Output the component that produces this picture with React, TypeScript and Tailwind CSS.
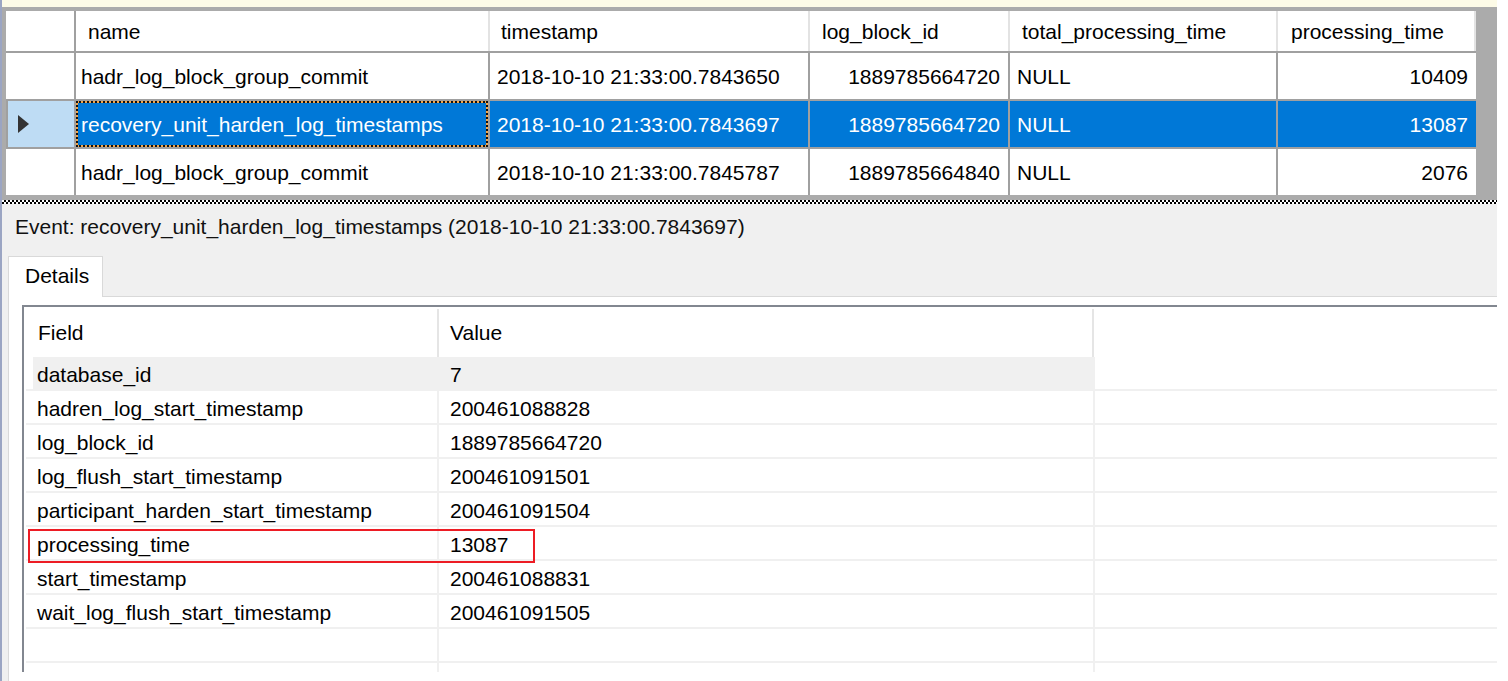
import React from 'react'

type EventRow = { name: string; ts: string; block: string; total: string; proc: string; sel?: boolean }

const rows: EventRow[] = [
  { name: 'hadr_log_block_group_commit', ts: '2018-10-10 21:33:00.7843650', block: '1889785664720', total: 'NULL', proc: '10409' },
  { name: 'recovery_unit_harden_log_timestamps', ts: '2018-10-10 21:33:00.7843697', block: '1889785664720', total: 'NULL', proc: '13087', sel: true },
  { name: 'hadr_log_block_group_commit', ts: '2018-10-10 21:33:00.7845787', block: '1889785664840', total: 'NULL', proc: '2076' },
]

const fields: [string, string][] = [
  ['database_id', '7'],
  ['hadren_log_start_timestamp', '200461088828'],
  ['log_block_id', '1889785664720'],
  ['log_flush_start_timestamp', '200461091501'],
  ['participant_harden_start_timestamp', '200461091504'],
  ['processing_time', '13087'],
  ['start_timestamp', '200461088831'],
  ['wait_log_flush_start_timestamp', '200461091505'],
  ['', ''],
  ['', ''],
]

const hcell = 'h-[40px] bg-white flex items-center border-r-2 border-[#e3e3e3]'

function RowArrow() {
  return (
    <svg width="13" height="20" viewBox="0 0 13 20">
      <polygon points="1,1 12,10 1,19" fill="#333" />
    </svg>
  )
}

export default function App() {
  return (
    <div className="w-[1508px] h-[681px] bg-white flex overflow-hidden font-['Liberation_Sans',Arial,sans-serif] text-[21px] text-black leading-none">
      <div className="w-[2px] shrink-0 bg-[#9ba5c3]" />
      <div className="w-[1495px] shrink-0 flex flex-col">
        {/* top strip */}
        <div className="h-[7px] bg-[#fdfbe7]" />

        {/* event grid */}
        <div className="h-[193px] bg-[#ababab] pl-[4px] pt-[4px]">
          <div className="w-[1470px] grid grid-cols-[70px_414px_320px_200px_268px_198px]">
            <div className="h-[40px] bg-white border-r-2 border-[#a0a0a0]" />
            <div className={`${hcell} pl-[12px]`}>name</div>
            <div className={`${hcell} pl-[11px]`}>timestamp</div>
            <div className={`${hcell} pl-[12px]`}>log_block_id</div>
            <div className={`${hcell} pl-[12px]`}>total_processing_time</div>
            <div className={`${hcell} pl-[13px]`}>processing_time</div>
          </div>
          <div className="w-[1470px] grid grid-cols-[68px_412px_318px_198px_266px_198px] gap-[2px] pt-[2px] bg-[#a0a0a0]">
            {rows.map((r, i) => {
              const cell = r.sel ? 'h-[46px] bg-[#0078d7] text-white flex items-center' : 'h-[46px] bg-white flex items-center'
              return (
                <React.Fragment key={i}>
                  <div className={r.sel ? 'h-[46px] bg-[#bedcf4] flex items-center pl-[9px] ml-[2px]' : 'h-[46px] bg-white'}>
                    {r.sel && <RowArrow />}
                  </div>
                  <div
                    className={
                      r.sel
                        ? `${cell} pl-[5px] shadow-[inset_0_0_0_2px_#f2a54a] outline-2 outline-dotted outline-[#111] -outline-offset-2`
                        : `${cell} pl-[5px]`
                    }
                  >
                    {r.name}
                  </div>
                  <div className={`${cell} pl-[7px]`}>{r.ts}</div>
                  <div className={`${cell} justify-end pr-[8px]`}>{r.block}</div>
                  <div className={`${cell} pl-[7px]`}>{r.total}</div>
                  <div className={`${cell} justify-end pr-[8px]`}>{r.proc}</div>
                </React.Fragment>
              )
            })}
          </div>
        </div>

        {/* splitter */}
        <div className="h-[4px] bg-white bg-[image:repeating-conic-gradient(#000_0_25%,#fff_0_50%)] bg-size-[4px_4px]" />

        {/* details area */}
        <div className="flex-1 bg-[#f0f0f0] flex flex-col">
          <div className="h-[44px] flex items-center pl-[13px] text-[#111]">
            Event: recovery_unit_harden_log_timestamps (2018-10-10 21:33:00.7843697)
          </div>
          <div className="mt-[8px] flex items-end">
            <div className="ml-[6px] w-[95px] h-[41px] bg-white border-t border-l border-r border-[#d9d9d9] flex items-center pl-[16px] pb-[3px]">
              Details
            </div>
            <div className="flex-1 border-b border-[#d9d9d9]" />
          </div>
          <div className="flex-1 ml-[6px] bg-white border-l border-[#d9d9d9] pl-[13px] pt-[8px]">
            <div className="relative h-[367px] border-t-2 border-l-2 border-[#828790] overflow-hidden">
              <div className="h-[50px] flex">
                <div className="w-[413px] pl-[14px] flex items-center">Field</div>
                <div className="w-[2px] mt-[2px] bg-[#e5e5e5]" />
                <div className="w-[653px] pl-[11px] flex items-center">Value</div>
                <div className="w-[2px] mt-[2px] bg-[#e5e5e5]" />
                <div className="flex-1" />
              </div>
              {fields.map(([f, v], i) => (
                <div key={i} className="h-[34px] ml-[2px] flex border-b-2 border-[#f0f0f0]">
                  <div className="w-[7px]" />
                  <div className={i === 0 ? 'w-[1062px] flex bg-[#f0f0f0]' : 'w-[1062px] flex'}>
                    <div className="w-[404px] pl-[4px] flex items-center pt-[2px]">{f}</div>
                    <div className="w-[2px] bg-[#f0f0f0]" />
                    <div className="w-[654px] pl-[11px] flex items-center pt-[2px]">{v}</div>
                    <div className="w-[2px] bg-[#f0f0f0]" />
                  </div>
                  <div className="flex-1" />
                </div>
              ))}
              <div className="absolute top-[222px] left-[4px] w-[507px] h-[34px] border-2 border-[#ed1c24]" />
            </div>
          </div>
        </div>
      </div>
    </div>
  )
}
